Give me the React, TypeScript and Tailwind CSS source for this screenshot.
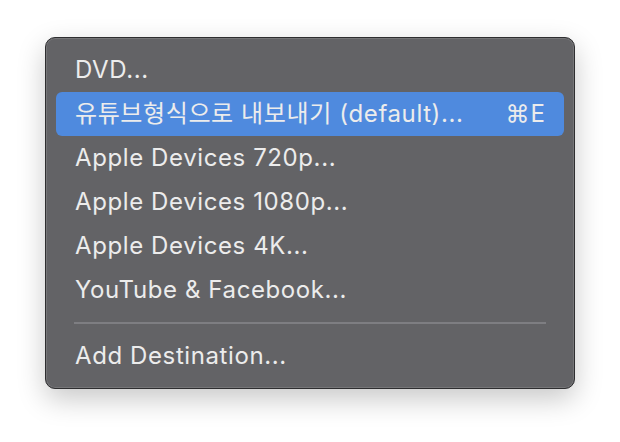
const items = [
  "DVD...",
  "유튜브형식으로 내보내기 (default)...",
  "Apple Devices 720p...",
  "Apple Devices 1080p...",
  "Apple Devices 4K...",
  "YouTube & Facebook...",
];

const MenuRow = ({ label, active, shortcut }: { label: string; active?: boolean; shortcut?: string }) => (
  <div
    className={`flex h-[44px] items-center justify-between rounded-[6px] pl-[19px] pr-[18px] ${
      active ? "bg-[#4f8ade]" : ""
    }`}
  >
    <span className="whitespace-nowrap">{label}</span>
    {shortcut && <span className="whitespace-nowrap tracking-[1px]">{shortcut}</span>}
  </div>
);

export default function App() {
  return (
    <div
      className="h-[442px] w-[620px] bg-white pl-[45px] pt-[37px]"
      style={{ fontFamily: 'Inter, "Noto Sans CJK KR", sans-serif' }}
    >
      <div className="h-[352px] w-[530px] rounded-[10px] border border-[#2e2e30] bg-[#636366] px-[10px] pt-[10px] text-[24px] tracking-[0.6px] text-[#ececec] shadow-[0_10px_28px_rgba(0,0,0,0.22),inset_0_0_0_1px_rgba(255,255,255,0.12)]">
        {items.map((label, i) => (
          <MenuRow key={label} label={label} active={i === 1} shortcut={i === 1 ? "⌘E" : undefined} />
        ))}
        {/* 구분선 */}
        <div className="flex h-[22px] items-center px-[18px]">
          <div className="h-[2px] w-full bg-[#7e7e82]" />
        </div>
        <MenuRow label="Add Destination..." />
      </div>
    </div>
  );
}
